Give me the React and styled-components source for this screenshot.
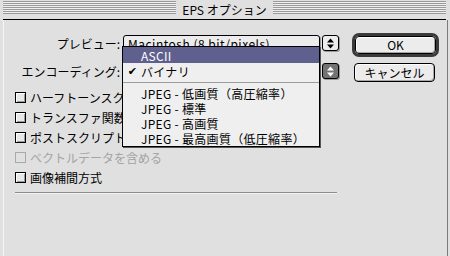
import React from "react";
import styled, { createGlobalStyle } from "styled-components";

const GlobalStyle = createGlobalStyle`
    html, body {
        margin: 0;
        padding: 0;
        background: #e0e0e0;
    }
    body {
        font-family: "Noto Sans CJK JP", "DejaVu Sans", sans-serif;
        font-size: 12px;
        color: #000;
    }
`;

const Window = styled.div`
    position: relative;
    width: 450px;
    height: 256px;
    overflow: hidden;
    background: #e0e0e0;
    display: flex;
    flex-direction: column;
`;

const TitleBar = styled.div`
    height: 20px;
    box-sizing: border-box;
    margin: 0 4px 0 3px;
    padding-top: 1px;
    border-bottom: 1px solid #000;
    display: flex;
    align-items: flex-start;
`;

const Stripes = styled.div`
    flex: 1;
    height: 13px;
    background: repeating-linear-gradient(
        to bottom,
        #9a9a9a 0 1px,
        #f0f0f0 1px 2px
    );
`;

const Title = styled.div`
    padding: 0 6px;
    line-height: 17px;
    white-space: nowrap;
`;

const Body = styled.div`
    flex: 1;
    display: flex;
    margin: 0 2px 0 3px;
    border-left: 1px solid #f6f6f6;
    border-right: 1px solid #7c7c7c;
`;

const Form = styled.div`
    width: 324px;
    padding: 15px 0 0 11px;
    display: flex;
    flex-direction: column;
`;

const Field = styled.div`
    display: grid;
    grid-template-columns: 105px 1fr;
    column-gap: 3px;
    align-items: center;
    height: 17px;
    margin-bottom: ${(p) => p.$after || 0}px;
`;

const Label = styled.div`
    text-align: right;
    white-space: nowrap;
    line-height: 17px;
`;

const Popup = styled.div`
    display: flex;
    gap: 2px;
    height: 17px;
`;

const PopupBox = styled.div`
    width: 197px;
    box-sizing: border-box;
    border: 1px solid #000;
    border-radius: 3px;
    background: #ececec;
    box-shadow: 1px 1px 0 #9a9a9a;
    padding-left: 4px;
    line-height: 15px;
    letter-spacing: 0.5px;
    white-space: nowrap;
    overflow: hidden;
`;

const Arrows = styled.div`
    width: 17px;
    height: 16px;
    box-sizing: border-box;
    border: 1px solid #000;
    border-radius: 3px;
    background: ${(p) => (p.$pressed ? "#737373" : "#ededed")};
    box-shadow: 1px 1px 0 #9a9a9a;
    display: flex;
    align-items: center;
    justify-content: center;
`;

const Checks = styled.div`
    display: flex;
    flex-direction: column;
    margin-top: 7px;
`;

const CheckRow = styled.div`
    width: ${(p) => (p.$clip ? "107px" : "auto")};
    height: 20px;
    display: flex;
    align-items: center;
    gap: 4px;
    overflow: hidden;
    color: ${(p) => (p.$disabled ? "#a4a4a4" : "#000")};
    white-space: nowrap;
`;

const Box = styled.span`
    flex: none;
    width: 11px;
    height: 11px;
    box-sizing: border-box;
    border: 1px solid ${(p) => (p.$disabled ? "#a8a8a8" : "#000")};
    background: ${(p) => (p.$disabled ? "#e0e0e0" : "#e8e8e8")};
    box-shadow: ${(p) =>
        p.$disabled ? "none" : "inset 1px 1px 0 #fff, inset -1px -1px 0 #9c9c9c"};
`;

const Rule = styled.div`
    width: 322px;
    height: 1px;
    margin-top: 5px;
    background: #8c8c8c;
    box-shadow: 0 1px 0 #f4f4f4;
`;

const Side = styled.div`
    padding: 13px 0 0 13px;
    display: flex;
    flex-direction: column;
    align-items: flex-start;
`;

const DefaultRing = styled.div`
    width: 87px;
    height: 24px;
    box-sizing: border-box;
    border: 3px solid #3a3a3a;
    border-radius: 7px;
    background: #d0d0d0;
    display: flex;
    margin-bottom: 6px;
`;

const Button = styled.div`
    flex: ${(p) => (p.$fill ? 1 : "none")};
    width: ${(p) => (p.$fill ? "auto" : "81px")};
    height: ${(p) => (p.$fill ? "auto" : "19px")};
    margin-left: ${(p) => (p.$fill ? 0 : "2px")};
    box-sizing: border-box;
    border: 1px solid #000;
    border-radius: 4px;
    background: #ececec;
    box-shadow: inset 1px 1px 0 #fff, inset -1px -1px 0 #a8a8a8;
    display: flex;
    align-items: center;
    justify-content: center;
    line-height: 1;
`;

const Menu = styled.div`
    position: absolute;
    left: 122px;
    top: 46px;
    width: 198px;
    box-sizing: border-box;
    border: 1px solid #000;
    background: #efefef;
    box-shadow: 1px 1px 0 #555;
    display: flex;
    flex-direction: column;
`;

const MenuItem = styled.div`
    height: ${(p) => p.$h || 15}px;
    display: flex;
    align-items: center;
    white-space: nowrap;
    letter-spacing: 0.3px;
    background: ${(p) => (p.$active ? "#60608f" : "transparent")};
    color: ${(p) => (p.$active ? "#fff" : "#000")};
`;

const Mark = styled.span`
    width: 17px;
    flex: none;
    text-align: center;
    font-family: "DejaVu Sans", sans-serif;
    font-size: 11px;
    padding-left: 1px;
`;

const Separator = styled.div`
    height: 7px;
    display: flex;
    align-items: center;
    &::after {
        content: "";
        flex: 1;
        height: 1px;
        background: #9c9c9c;
    }
`;

const UpDown = ({ color }) => (
    <svg width="7" height="11" viewBox="0 0 7 11">
        <path d="M3.5 0.5 L7 4.5 L0 4.5 Z" fill={color} />
        <path d="M0 6.5 L7 6.5 L3.5 10.5 Z" fill={color} />
    </svg>
);

// the first three rows run under the open menu, so they are cut at its edge
const options = [
    { label: "ハーフトーンスクリーンを含める", clip: true },
    { label: "トランスファ関数を含める", clip: true },
    { label: "ポストスクリプトカラーマネージメント", clip: true },
    { label: "ベクトルデータを含める", disabled: true },
    { label: "画像補間方式" },
];

const encodings = [
    "JPEG - 低画質（高圧縮率）",
    "JPEG - 標準",
    "JPEG - 高画質",
    "JPEG - 最高画質（低圧縮率）",
];

const App = () => {
    return (
        <>
            <GlobalStyle />
            <Window>
                <TitleBar>
                    <Stripes />
                    <Title>EPS オプション</Title>
                    <Stripes />
                </TitleBar>
                <Body>
                    <Form>
                        <Field $after={11}>
                            <Label>プレビュー:</Label>
                            <Popup>
                                <PopupBox>Macintosh (8 bit/pixels)</PopupBox>
                                <Arrows>
                                    <UpDown color="#000" />
                                </Arrows>
                            </Popup>
                        </Field>
                        <Field>
                            <Label>エンコーディング:</Label>
                            <Popup>
                                <PopupBox />
                                <Arrows $pressed>
                                    <UpDown color="#fff" />
                                </Arrows>
                            </Popup>
                        </Field>
                        <Checks>
                            {options.map((o) => (
                                <CheckRow
                                    key={o.label}
                                    $clip={o.clip}
                                    $disabled={o.disabled}
                                >
                                    <Box $disabled={o.disabled} />
                                    {o.label}
                                </CheckRow>
                            ))}
                        </Checks>
                        <Rule />
                    </Form>
                    <Side>
                        <DefaultRing>
                            <Button $fill>OK</Button>
                        </DefaultRing>
                        <Button>キャンセル</Button>
                    </Side>
                </Body>
                <Menu>
                    <MenuItem $h={16} $active>
                        <Mark />
                        ASCII
                    </MenuItem>
                    <MenuItem $h={16}>
                        <Mark>✔</Mark>
                        バイナリ
                    </MenuItem>
                    <Separator />
                    {encodings.map((e) => (
                        <MenuItem key={e}>
                            <Mark />
                            {e}
                        </MenuItem>
                    ))}
                </Menu>
            </Window>
        </>
    );
};

export default App;
